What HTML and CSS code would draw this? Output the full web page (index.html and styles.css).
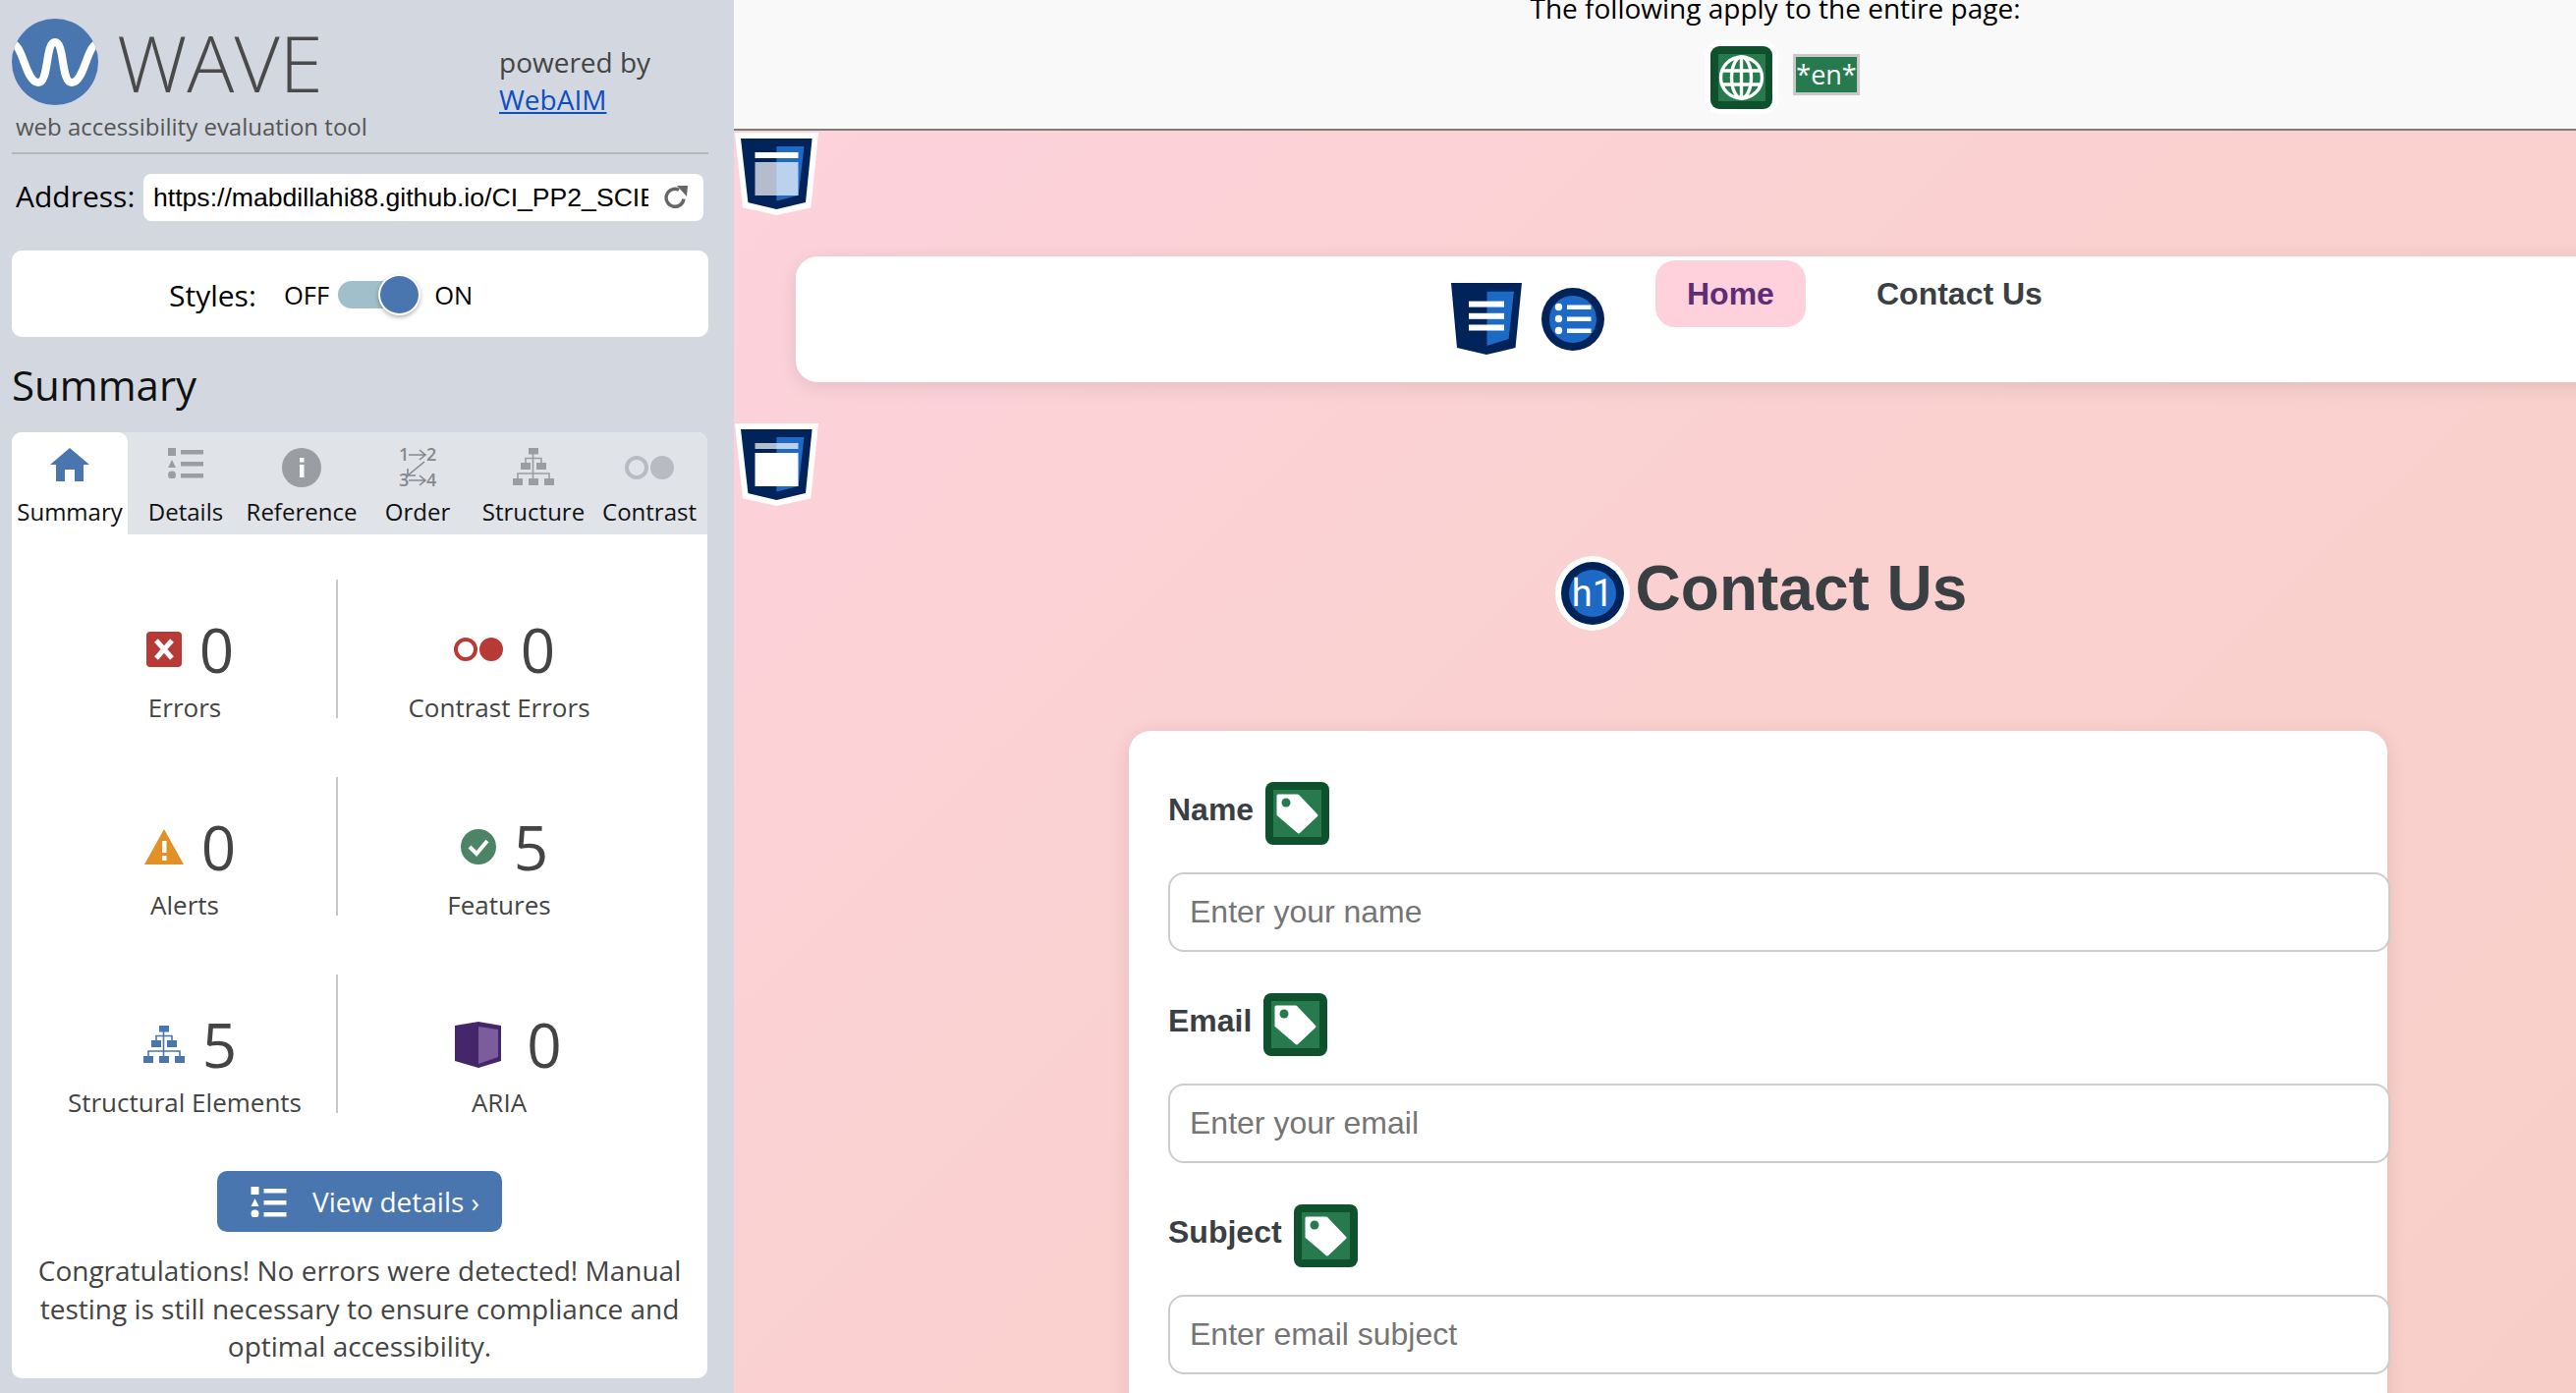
FILE: index.html
```html
<!DOCTYPE html>
<html lang="en">
<head>
    <meta charset="UTF-8">
    <title>WAVE Report of Contact Us</title>
    <link rel="stylesheet" href="styles.css">
</head>
<body>
    <svg class="icon-defs" width="0" height="0" aria-hidden="true">
        <symbol id="i-list" viewBox="0 0 36 31">
            <rect x="0" y="0" width="8" height="8"/>
            <polygon points="4,12 8,20 0,20"/>
            <circle cx="4" cy="27.5" r="4"/>
            <rect x="13" y="2" width="23" height="4.5"/>
            <rect x="13" y="14" width="23" height="4.5"/>
            <rect x="13" y="26" width="23" height="4.5"/>
        </symbol>
        <symbol id="i-tree" viewBox="0 0 42 38">
            <rect x="16" y="0" width="10" height="6.5"/>
            <rect x="8" y="15" width="10" height="7"/>
            <rect x="24" y="15" width="10" height="7"/>
            <rect x="0" y="31" width="10" height="7"/>
            <rect x="16" y="31" width="10" height="7"/>
            <rect x="32" y="31" width="10" height="7"/>
            <path d="M20.5 6v25M13 15v-4.5h16V15M5 31v-5h32v5" fill="none" stroke="currentColor" stroke-width="1.6"/>
        </symbol>
        <symbol id="i-pair" viewBox="0 0 50 24">
            <circle cx="12" cy="12" r="10" fill="none" stroke="currentColor" stroke-width="4"/>
            <circle cx="38" cy="12" r="12"/>
        </symbol>
        <symbol id="i-tag" viewBox="0 0 65 64">
            <rect width="65" height="64" rx="8" fill="#10512d"/>
            <rect x="8" y="8" width="49" height="48" fill="#267a4e"/>
            <polygon points="13,14 33,14 52,34 34,51 13,33" fill="#fff" stroke="#fff" stroke-width="3" stroke-linejoin="round"/>
            <circle cx="21" cy="21" r="4.5" fill="#267a4e"/>
        </symbol>
        <symbol id="i-region" viewBox="0 0 85 84">
            <polygon points="0,0 85,0 77.4,76.4 42.4,84 8,76.4" fill="#fff"/>
            <polygon points="6,6 78.6,6 72,71 42.4,78 13.4,71" fill="#00235a"/>
            <polygon points="42.4,14 70.5,14 64.7,64 42.4,69.5" fill="#1c69c6"/>
        </symbol>
    </svg>

    <aside class="sidebar">
        <header class="brand">
            <div class="brand-left">
                <div class="brand-top">
                    <svg class="wave-logo" viewBox="0 0 88 88">
                        <defs><clipPath id="logoClip"><circle cx="44" cy="44" r="44"/></clipPath></defs>
                        <circle cx="44" cy="44" r="44" fill="#4a76b0"/>
                        <path clip-path="url(#logoClip)" d="M-2 27C11 19 13 65 27 65C38 65 34 24 44 24C54 24 50 65 61 65C75 65 77 19 90 27" fill="none" stroke="#fff" stroke-width="8"/>
                    </svg>
                    <span class="wave-name">WAVE</span>
                </div>
                <div class="tagline">web accessibility evaluation tool</div>
            </div>
            <div class="brand-right">
                <div>powered by</div>
                <a href="#">WebAIM</a>
            </div>
        </header>

        <div class="address-row">
            <label for="address">Address:</label>
            <div class="address-box">
                <input id="address" type="text" value="https://mabdillahi88.github.io/CI_PP2_SCIENCE_QUIZ/contact.html" readonly>
                <svg class="reload" viewBox="0 0 24 24"><path d="M20 13.5A9 9 0 1 1 15 4.2" fill="none" stroke="#666" stroke-width="3.4"/><polygon points="13,0 24,0 23,11" fill="#666"/></svg>
            </div>
        </div>

        <div class="styles-card">
            <span class="styles-label">Styles:</span>
            <span class="styles-state">OFF</span>
            <span class="toggle"><span class="toggle-knob"></span></span>
            <span class="styles-state">ON</span>
        </div>

        <h2 class="panel-title">Summary</h2>

        <section class="panel">
            <nav class="tabs">
                <div class="tab active">
                    <svg class="tab-icon" width="40" height="34" viewBox="0 0 40 34"><path d="M20 0L40 17H34V34H25V22H15V34H6V17H0Z" fill="#4a76b0"/></svg>
                    <span>Summary</span>
                </div>
                <div class="tab">
                    <svg class="tab-icon" width="36" height="31"><use href="#i-list"/></svg>
                    <span>Details</span>
                </div>
                <div class="tab">
                    <svg class="tab-icon" width="40" height="40" viewBox="0 0 40 40"><circle cx="20" cy="20" r="20" fill="#9a9ea2"/><rect x="18" y="10" width="4.5" height="4.5" fill="#fff"/><rect x="18" y="17" width="4.5" height="13" fill="#fff"/></svg>
                    <span>Reference</span>
                </div>
                <div class="tab">
                    <svg class="tab-icon order-icon" width="38" height="40" viewBox="0 0 38 40">
                        <text x="0" y="13">1</text><text x="28" y="13">2</text>
                        <text x="0" y="39">3</text><text x="28" y="39">4</text>
                        <path d="M10 7h16M21 2l6 5-6 5M10 33h16M21 28l6 5-6 5M26 14L9 28M9 21v7h8" fill="none" stroke="#85898d" stroke-width="1.6"/>
                    </svg>
                    <span>Order</span>
                </div>
                <div class="tab">
                    <svg class="tab-icon grey" width="42" height="38"><use href="#i-tree"/></svg>
                    <span>Structure</span>
                </div>
                <div class="tab">
                    <svg class="tab-icon pale" width="50" height="24"><use href="#i-pair"/></svg>
                    <span>Contrast</span>
                </div>
            </nav>

            <div class="stat-grid">
                <div class="stat">
                    <div class="stat-top">
                        <svg width="36" height="36" viewBox="0 0 36 36"><rect width="36" height="36" rx="4" fill="#b73a36"/><path d="M10 9l16 18M26 9L10 27" stroke="#fff" stroke-width="5"/></svg>
                        <span class="stat-num">0</span>
                    </div>
                    <div class="stat-label">Errors</div>
                </div>
                <div class="stat">
                    <div class="stat-top">
                        <svg class="red" width="50" height="24"><use href="#i-pair"/></svg>
                        <span class="stat-num">0</span>
                    </div>
                    <div class="stat-label">Contrast Errors</div>
                </div>
                <div class="stat">
                    <div class="stat-top">
                        <svg width="40" height="36" viewBox="0 0 40 36"><polygon points="20,0 40,36 0,36" fill="#e19128"/><rect x="18" y="12" width="4.5" height="12" fill="#fff"/><rect x="18" y="27" width="4.5" height="5" fill="#fff"/></svg>
                        <span class="stat-num">0</span>
                    </div>
                    <div class="stat-label">Alerts</div>
                </div>
                <div class="stat">
                    <div class="stat-top">
                        <svg width="36" height="36" viewBox="0 0 36 36"><circle cx="18" cy="18" r="18" fill="#4d8367"/><path d="M9 18l7 7 11-13" fill="none" stroke="#fff" stroke-width="4"/></svg>
                        <span class="stat-num">5</span>
                    </div>
                    <div class="stat-label">Features</div>
                </div>
                <div class="stat">
                    <div class="stat-top">
                        <svg class="blue" width="42" height="38"><use href="#i-tree"/></svg>
                        <span class="stat-num">5</span>
                    </div>
                    <div class="stat-label">Structural Elements</div>
                </div>
                <div class="stat">
                    <div class="stat-top stat-top-wide">
                        <svg width="47" height="47" viewBox="0 0 47 47"><polygon points="0,4 24,0 47,4 47,40 24,47 0,40" fill="#45266b"/><polygon points="24,5 44,8 44,36 24,43" fill="#7a5d9a"/></svg>
                        <span class="stat-num">0</span>
                    </div>
                    <div class="stat-label">ARIA</div>
                </div>
            </div>

            <div class="details-wrap">
                <a class="details-btn" href="#">
                    <svg class="btn-icon" width="37" height="31"><use href="#i-list"/></svg>
                    <span>View details ›</span>
                </a>
            </div>
            <p class="result-text">Congratulations! No errors were detected! Manual testing is still necessary to ensure compliance and optimal accessibility.</p>
        </section>
    </aside>

    <main class="viewport">
        <div class="page-notes">
            <p>The following apply to the entire page:</p>
            <div class="page-note-icons">
                <svg class="globe" width="75" height="75" viewBox="0 0 75 75">
                    <rect width="75" height="75" rx="16" fill="#fff"/>
                    <rect x="6" y="6" width="63" height="64" rx="9" fill="#10512d"/>
                    <rect x="14" y="14" width="48" height="48" fill="#267a4e"/>
                    <g fill="none" stroke="#fff" stroke-width="3.4">
                        <circle cx="37.5" cy="38" r="21"/>
                        <ellipse cx="37.5" cy="38" rx="10" ry="21"/>
                        <path d="M37.5 17v42M19 31h37M19 45h37"/>
                    </g>
                </svg>
                <span class="lang-tag">*en*</span>
            </div>
        </div>

        <div class="page">
            <svg class="region-mark mark-one" width="85" height="84" viewBox="0 0 85 84">
                <use href="#i-region"/>
                <rect x="20.5" y="20" width="44" height="6" fill="#fff"/>
                <rect x="20.5" y="30" width="44" height="34" fill="#fff" opacity=".7"/>
            </svg>
            <svg class="region-mark mark-two" width="85" height="84" viewBox="0 0 85 84">
                <use href="#i-region"/>
                <rect x="20.5" y="20" width="44" height="6" fill="#fff" opacity=".7"/>
                <rect x="20.5" y="30" width="44" height="34" fill="#fff"/>
            </svg>

            <header class="site-nav">
                <svg class="nav-shield" width="72" height="73" viewBox="0 0 72 73">
                    <polygon points="0,0 72,0 65.5,66 36,73 6,66" fill="#00235a"/>
                    <polygon points="36.5,8.7 64,8.7 58.6,57 36.5,64" fill="#1c69c6"/>
                    <rect x="18" y="18.6" width="36" height="6" fill="#fff"/>
                    <rect x="18" y="30.8" width="36" height="6" fill="#fff"/>
                    <rect x="18" y="42.5" width="36" height="6" fill="#fff"/>
                </svg>
                <svg class="nav-list" width="64" height="64" viewBox="0 0 64 64">
                    <circle cx="32" cy="32" r="32" fill="#00235a"/>
                    <circle cx="32" cy="32" r="24" fill="#1c69c6"/>
                    <g fill="#fff">
                        <circle cx="17.5" cy="19.5" r="3.7"/><circle cx="17.5" cy="31.5" r="3.7"/><circle cx="17.5" cy="43.5" r="3.7"/>
                        <rect x="26" y="17.5" width="24.5" height="4.5"/><rect x="26" y="29.5" width="24.5" height="4.5"/><rect x="26" y="41.5" width="24.5" height="4.5"/>
                    </g>
                </svg>
                <a class="nav-link current" href="#">Home</a>
                <a class="nav-link" href="#">Contact Us</a>
            </header>

            <div class="content">
                <h1 class="page-title">
                    <svg class="h1-badge" width="76" height="76" viewBox="0 0 76 76">
                        <circle cx="38" cy="38" r="38" fill="#fff"/>
                        <circle cx="38" cy="38" r="32" fill="#00235a"/>
                        <circle cx="38" cy="38" r="24" fill="#1c69c6"/>
                        <text x="38" y="51" text-anchor="middle">h1</text>
                    </svg>
                    <span>Contact Us</span>
                </h1>

                <form class="form-card">
                    <div class="field">
                        <div class="field-head"><label for="name">Name</label><svg width="65" height="64"><use href="#i-tag"/></svg></div>
                        <input id="name" type="text" placeholder="Enter your name">
                    </div>
                    <div class="field">
                        <div class="field-head"><label for="email">Email</label><svg width="65" height="64"><use href="#i-tag"/></svg></div>
                        <input id="email" type="email" placeholder="Enter your email">
                    </div>
                    <div class="field">
                        <div class="field-head"><label for="subject">Subject</label><svg width="65" height="64"><use href="#i-tag"/></svg></div>
                        <input id="subject" type="text" placeholder="Enter email subject">
                    </div>
                </form>
            </div>
        </div>
    </main>
</body>
</html>
```
FILE: styles.css
```css
* {
    box-sizing: border-box;
}
html, body {
    height: 100%;
}
body {
    margin: 0;
    display: flex;
    height: 1418px;
    overflow: hidden;
    font-family: "Open Sans", sans-serif;
}
.icon-defs {
    position: absolute;
}

/* left panel */
.sidebar {
    width: 747px;
    flex-shrink: 0;
    padding: 0 26px 0 12px;
    background-color: #d3d8e0;
    overflow: hidden;
}
.brand {
    display: flex;
    height: 157px;
    padding-top: 19px;
    border-bottom: 2px solid #b3b7bb;
}
.brand-left {
    width: 496px;
}
.brand-top {
    display: flex;
    align-items: center;
    gap: 19px;
}
.wave-logo {
    width: 88px;
    height: 88px;
}
.wave-name {
    font-size: 80px;
    font-weight: 300;
    line-height: 88px;
    color: #4a4a4a;
}
.tagline {
    margin: 5px 0 0 4px;
    font-size: 24px;
    line-height: 34px;
    color: #555;
}
.brand-right {
    padding-top: 25px;
    font-size: 28px;
    line-height: 38px;
    color: #444;
}
.brand-right a {
    color: #0a4fc4;
}

.address-row {
    display: flex;
    align-items: center;
    gap: 8px;
    margin-top: 20px;
    padding-left: 4px;
}
.address-row label {
    width: 122px;
    margin-top: -2px;
    font-size: 30px;
    line-height: 48px;
    color: #000;
    white-space: nowrap;
}
.address-box {
    display: flex;
    align-items: center;
    width: 570px;
    height: 48px;
    padding: 0 16px 0 10px;
    background-color: white;
    border-radius: 8px;
}
.address-box input {
    width: 504px;
    padding: 0;
    border: 0;
    outline: 0;
    font-family: "Liberation Sans", Arial, sans-serif;
    font-size: 26.6px;
    color: #000;
    background: none;
}
.reload {
    width: 24px;
    height: 24px;
    margin-left: 16px;
}

.styles-card {
    display: flex;
    align-items: center;
    height: 88px;
    margin-top: 30px;
    padding-top: 2px;
    padding-left: 160px;
    background-color: white;
    border-radius: 10px;
}
.styles-label {
    width: 117px;
    font-size: 30px;
}
.styles-state {
    font-size: 25.5px;
}
.toggle {
    position: relative;
    width: 76px;
    height: 28px;
    margin: 0 22px 0 9px;
    background-color: #a1bfca;
    border-radius: 14px;
}
.toggle-knob {
    position: absolute;
    top: -7px;
    right: -8px;
    width: 43px;
    height: 42px;
    background-color: #4a76b0;
    border: 2px solid white;
    border-radius: 50%;
    box-shadow: 0 2px 4px rgba(0,0,0,0.3);
}

.panel-title {
    margin: 22px 0 0;
    font-size: 42px;
    font-weight: 400;
    line-height: 54px;
    color: #111;
}

.panel {
    width: 708px;
    margin-top: 21px;
    background-color: white;
    border-radius: 10px;
}
.tabs {
    display: grid;
    grid-template-columns: repeat(6, 118px);
    height: 104px;
    background-color: #e0e3e8;
    border-radius: 10px 10px 0 0;
}
.tab {
    display: flex;
    flex-direction: column;
    align-items: center;
    font-size: 24px;
    line-height: 32px;
    color: #111;
    position: relative;
}
.tab span {
    position: absolute;
    top: 65px;
    white-space: nowrap;
}
.tab.active {
    background-color: white;
    border-radius: 10px 10px 0 0;
}
.tab-icon {
    margin-top: 16px;
    fill: #9a9ea2;
}
.tab-icon.grey {
    color: #9a9ea2;
}
.tab-icon.pale {
    margin-top: 24px;
    fill: #b8bcc2;
    color: #b8bcc2;
}
.order-icon {
    overflow: visible;
}
.order-icon text {
    font-family: "Open Sans", sans-serif;
    font-size: 18px;
    font-weight: 600;
    fill: #85898d;
}

.stat-grid {
    display: grid;
    grid-template-columns: 310px 328px;
    row-gap: 60px;
    margin: 46px 0 0 22px;
}
.stat {
    display: flex;
    flex-direction: column;
    align-items: center;
    height: 141px;
    padding-top: 41px;
}
.stat:nth-child(odd) {
    border-right: 2px solid #c8c8c8;
}
.stat-top {
    display: flex;
    align-items: center;
    justify-content: center;
    gap: 18px;
    height: 60px;
    padding-left: 11px;
}
.stat-top-wide {
    gap: 26px;
    padding-left: 19px;
}
.stat-num {
    font-size: 62px;
    font-weight: 400;
    line-height: 60px;
    color: #444;
}
.stat-label {
    margin-top: 11px;
    font-size: 26px;
    line-height: 36px;
    color: #444;
}
.red {
    fill: #b73a36;
    color: #b73a36;
}
.blue {
    fill: #4a76b0;
    color: #4a76b0;
}

.details-wrap {
    display: flex;
    justify-content: center;
    margin-top: 59px;
}
.details-btn {
    display: flex;
    align-items: center;
    gap: 26px;
    width: 290px;
    height: 62px;
    padding-left: 34px;
    font-size: 28px;
    color: white;
    text-decoration: none;
    background-color: #4a76b0;
    border-radius: 10px;
}
.btn-icon {
    fill: white;
}
.result-text {
    margin: 20px 0 0;
    padding: 0 24px 13px;
    font-size: 28px;
    line-height: 38.5px;
    text-align: center;
    color: #444;
}

/* tested page */
.viewport {
    flex: 1;
    min-width: 0;
    display: flex;
    flex-direction: column;
    overflow: hidden;
}
.page-notes {
    height: 133px;
    flex-shrink: 0;
    text-align: center;
    background-color: #f9f9f9;
    border-bottom: 2px solid #7a7f75;
}
.page-notes p {
    margin: -12px 0 0;
    padding-left: 245px;
    font-size: 28px;
    line-height: 40px;
    color: #000;
}
.page-note-icons {
    display: flex;
    align-items: flex-start;
    gap: 15px;
    margin-top: 13px;
    padding-left: 988px;
}
.lang-tag {
    margin-top: 14px;
    width: 68px;
    height: 42px;
    font-size: 27px;
    line-height: 36px;
    color: white;
    background-color: #267a4e;
    border: 3px solid #c8c8c8;
    white-space: nowrap;
}

.page {
    position: relative;
    flex: 1;
    background: linear-gradient(135deg, #fdd2dc, #fad1d0 40%, #f8cfc7);
}
.region-mark {
    position: absolute;
    left: 1px;
}
.mark-one {
    top: 2px;
}
.mark-two {
    top: 298px;
}
.site-nav {
    display: flex;
    align-items: flex-start;
    width: 1900px;
    height: 128px;
    margin: 128px 0 0 63px;
    padding-left: 667px;
    background-color: white;
    border-radius: 22px;
    box-shadow: 0 4px 20px rgba(0,0,0,0.1);
}
.nav-shield {
    margin-top: 27px;
    flex-shrink: 0;
}
.nav-list {
    margin: 32px 0 0 20px;
    flex-shrink: 0;
}
.nav-link {
    height: 68px;
    margin-top: 4px;
    padding: 0 33px;
    font-family: "Liberation Sans", Arial, sans-serif;
    font-size: 32px;
    font-weight: 700;
    line-height: 68px;
    color: #3a3f44;
    text-decoration: none;
    white-space: nowrap;
    border-radius: 20px;
}
.nav-link.current {
    width: 153px;
    margin: 4px 39px 0 52px;
    padding: 0 32px;
    color: #5f2d74;
    background-color: #ffd1dc;
}
.content {
    width: 1281px;
    margin-left: 402px;
}
.page-title {
    display: flex;
    align-items: center;
    justify-content: center;
    gap: 6px;
    height: 76px;
    margin: 177px 0 102px;
    padding-left: 6px;
    font-family: "Liberation Sans", Arial, sans-serif;
    font-size: 64px;
    font-weight: 700;
    color: #3a3f44;
}
.page-title span {
    margin-top: -11px;
}
.h1-badge text {
    font-family: Roboto, sans-serif;
    font-size: 38px;
    font-weight: 400;
    fill: white;
}
.form-card {
    height: 900px;
    padding: 52px 40px 0;
    background-color: white;
    border-radius: 22px;
    box-shadow: 0 4px 20px rgba(0,0,0,0.1);
}
.field {
    margin-bottom: 42px;
}
.field-head {
    display: flex;
    align-items: center;
    gap: 12px;
    height: 64px;
    margin-bottom: 28px;
    color: #3a3f44;
}
.field-head label {
    margin-top: -8px;
    font-family: "Liberation Sans", Arial, sans-serif;
    font-size: 32px;
    font-weight: 700;
}
.field input {
    display: block;
    width: 1244px;
    height: 81px;
    padding: 0 20px;
    font-family: "Liberation Sans", Arial, sans-serif;
    font-size: 32px;
    background-color: white;
    border: 2px solid #ccc;
    border-radius: 16px;
}
```
